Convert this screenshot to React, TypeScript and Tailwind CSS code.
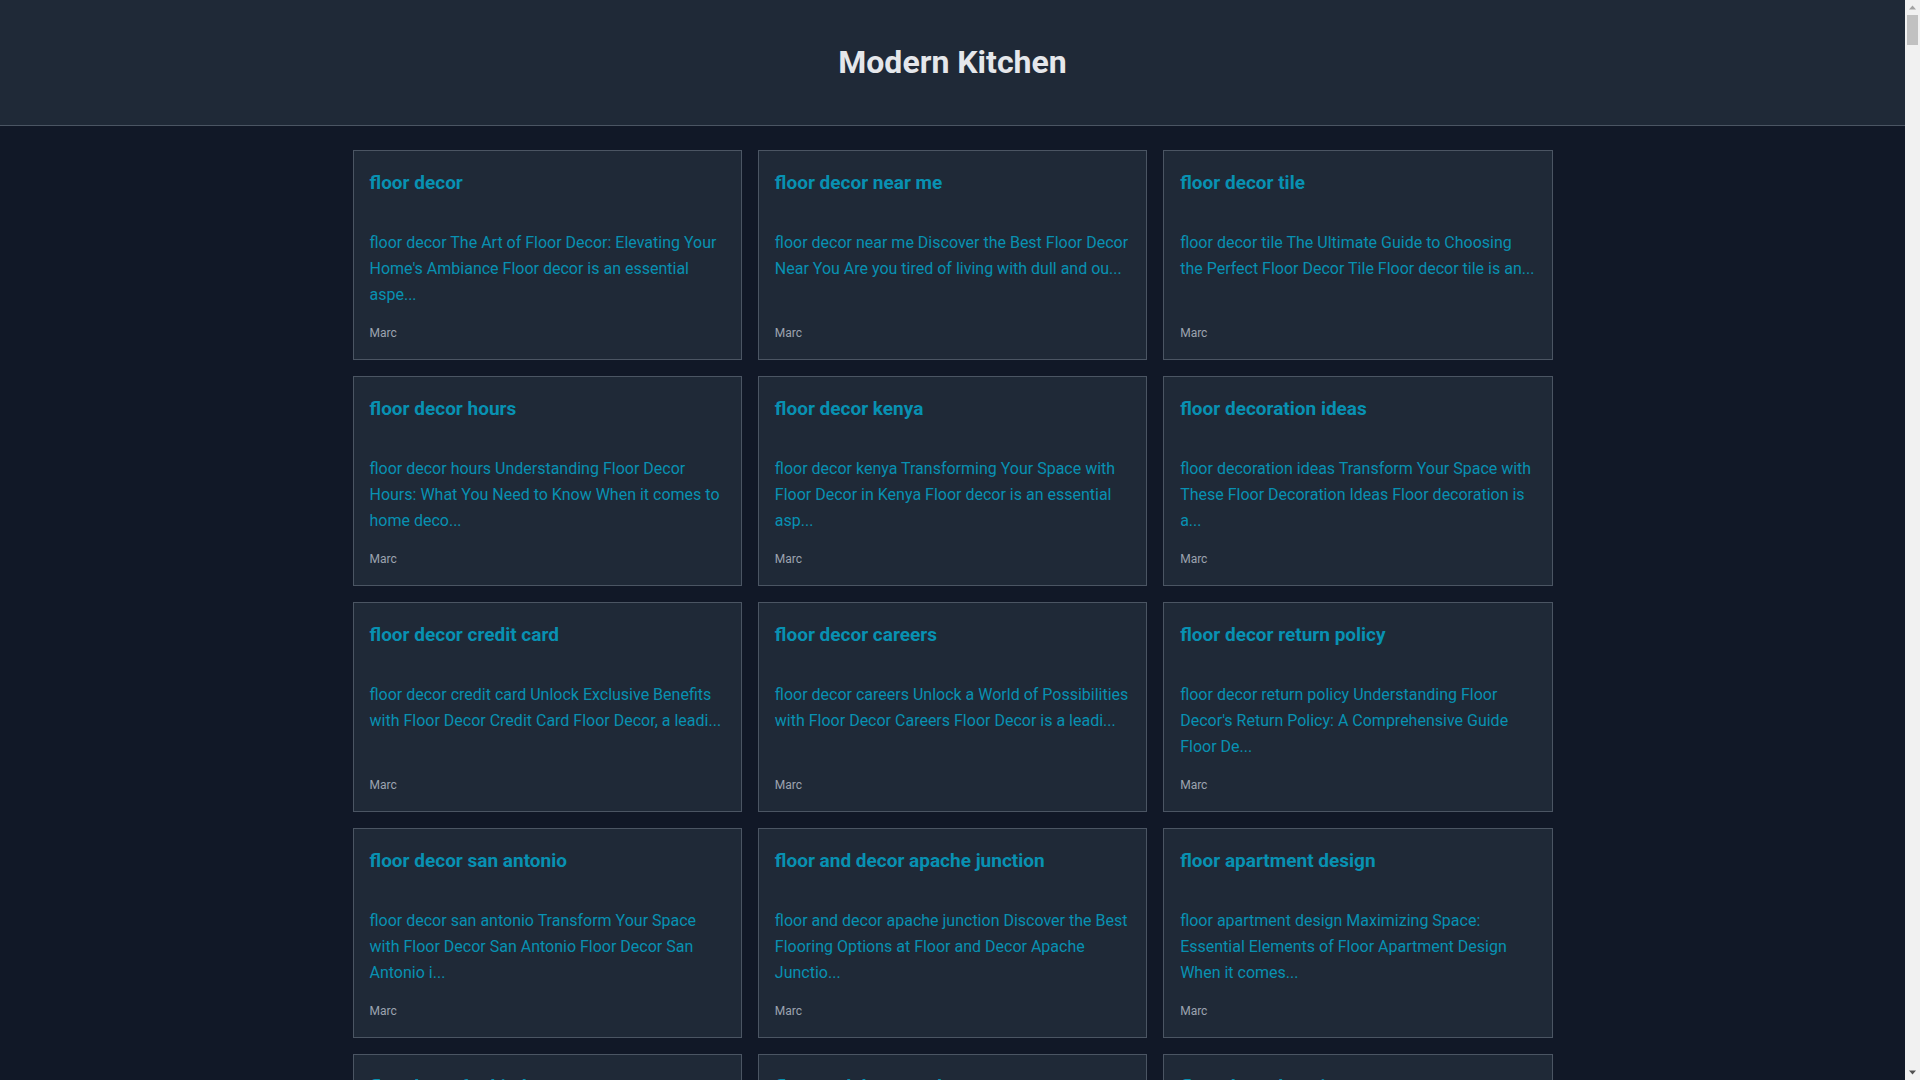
import React from "react";

type Post = {
    title: string;
    excerpt: string;
    author: string;
};

const posts: Post[] = [
    {
        title: "floor decor",
        excerpt:
            "floor decor The Art of Floor Decor: Elevating Your Home's Ambiance Floor decor is an essential aspe...",
        author: "Marc",
    },
    {
        title: "floor decor near me",
        excerpt:
            "floor decor near me Discover the Best Floor Decor Near You Are you tired of living with dull and ou...",
        author: "Marc",
    },
    {
        title: "floor decor tile",
        excerpt:
            "floor decor tile The Ultimate Guide to Choosing the Perfect Floor Decor Tile Floor decor tile is an...",
        author: "Marc",
    },
    {
        title: "floor decor hours",
        excerpt:
            "floor decor hours Understanding Floor Decor Hours: What You Need to Know When it comes to home deco...",
        author: "Marc",
    },
    {
        title: "floor decor kenya",
        excerpt:
            "floor decor kenya Transforming Your Space with Floor Decor in Kenya Floor decor is an essential asp...",
        author: "Marc",
    },
    {
        title: "floor decoration ideas",
        excerpt:
            "floor decoration ideas Transform Your Space with These Floor Decoration Ideas Floor decoration is a...",
        author: "Marc",
    },
    {
        title: "floor decor credit card",
        excerpt:
            "floor decor credit card Unlock Exclusive Benefits with Floor Decor Credit Card Floor Decor, a leadi...",
        author: "Marc",
    },
    {
        title: "floor decor careers",
        excerpt:
            "floor decor careers Unlock a World of Possibilities with Floor Decor Careers Floor Decor is a leadi...",
        author: "Marc",
    },
    {
        title: "floor decor return policy",
        excerpt:
            "floor decor return policy Understanding Floor Decor's Return Policy: A Comprehensive Guide Floor De...",
        author: "Marc",
    },
    {
        title: "floor decor san antonio",
        excerpt:
            "floor decor san antonio Transform Your Space with Floor Decor San Antonio Floor Decor San Antonio i...",
        author: "Marc",
    },
    {
        title: "floor and decor apache junction",
        excerpt:
            "floor and decor apache junction Discover the Best Flooring Options at Floor and Decor Apache Junctio...",
        author: "Marc",
    },
    {
        title: "floor apartment design",
        excerpt:
            "floor apartment design Maximizing Space: Essential Elements of Floor Apartment Design When it comes...",
        author: "Marc",
    },
    {
        title: "floor lamp for kitchen",
        excerpt:
            "floor lamp for kitchen Brighten Your Space with the Right Floor Lamp for Your Kitchen A well-lit ki...",
        author: "Marc",
    },
    {
        title: "floor and decor outlet",
        excerpt:
            "floor and decor outlet Finding Quality Flooring at Floor and Decor Outlet Prices Floor and Decor ou...",
        author: "Marc",
    },
    {
        title: "floor decor locations",
        excerpt:
            "floor decor locations Find a Floor Decor Store Near You Floor Decor has locations across the count...",
        author: "Marc",
    },
    {
        title: "floor decor flooring",
        excerpt:
            "floor decor flooring Choosing the Right Flooring for Every Room in Your Home Flooring sets the ton...",
        author: "Marc",
    },
    {
        title: "floor decor backsplash",
        excerpt:
            "floor decor backsplash Elevate Your Kitchen with a Stylish Floor Decor Backsplash A backsplash is a...",
        author: "Marc",
    },
    {
        title: "floor decor vinyl",
        excerpt:
            "floor decor vinyl The Benefits of Vinyl Flooring from Floor Decor Vinyl flooring has become a popu...",
        author: "Marc",
    },
];

const PostCard = ({ post }: { post: Post }) => (
    <div className="flex flex-col p-4 bg-[#1f2937] border border-[#4b5563]">
        <h2 className="mt-[2px] mb-[33px] text-[19px] font-bold leading-7 text-[#0891b2]">
            {post.title}
        </h2>
        <p className="text-base leading-[26px] text-[#0891b2]">
            {post.excerpt}
        </p>
        <div className="mt-auto pt-[15px] text-xs leading-5 text-[#9ca3af]">
            {post.author}
        </div>
    </div>
);

// the page's scrollbar, as the browser drew it in the screenshot
const ScrollBar = () => (
    <div className="w-[15px] shrink-0 flex flex-col items-center bg-[#f1f1f1]">
        <svg width="15" height="15" viewBox="0 0 15 15" className="shrink-0">
            <polygon points="4,9.5 11,9.5 7.5,5.5" fill="#a3a3a3" />
        </svg>
        <div className="w-[11px] h-[30px] bg-[#c1c1c1]" />
        <div className="flex-1" />
        <svg width="15" height="15" viewBox="0 0 15 15" className="shrink-0">
            <polygon points="4,5.5 11,5.5 7.5,9.5" fill="#505050" />
        </svg>
    </div>
);

export default function App() {
    return (
        <div
            className="h-screen flex bg-[#111827]"
            style={{ fontFamily: "Roboto, 'Liberation Sans', sans-serif" }}
        >
            <div className="flex-1 overflow-hidden">
                {/* header */}
                <header className="h-[126px] flex items-center justify-center bg-[#1f2937] border-b border-[#4b5563]">
                    <h1 className="pb-[2px] text-[32px] font-bold leading-10 text-[#e5e7eb]">
                        Modern Kitchen
                    </h1>
                </header>

                {/* posts */}
                <main className="max-w-[1200px] mx-auto py-6">
                    <div className="grid grid-cols-3 gap-4">
                        {posts.map((post) => (
                            <PostCard key={post.title} post={post} />
                        ))}
                    </div>
                </main>
            </div>
            <ScrollBar />
        </div>
    );
}
